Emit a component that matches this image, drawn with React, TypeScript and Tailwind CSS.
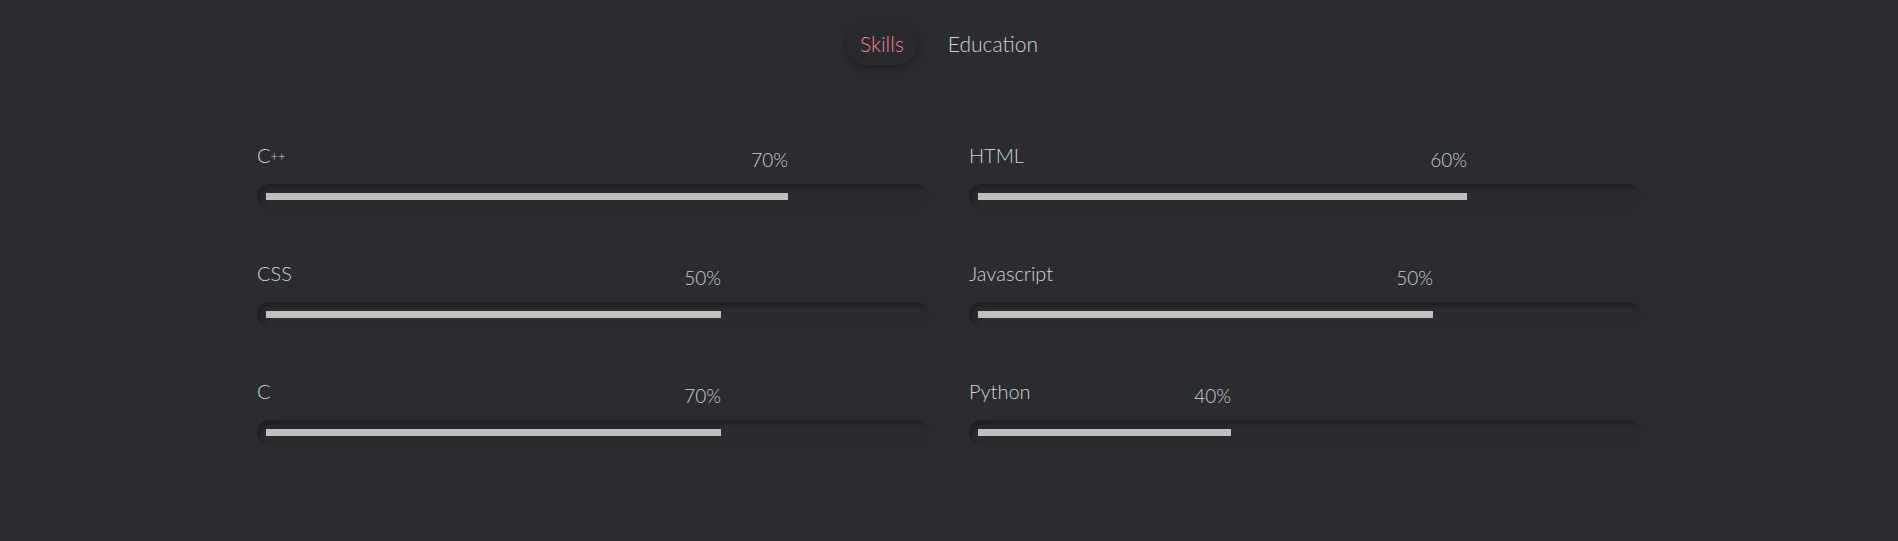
import React, { useState } from 'react'

type Skill = {
  name: React.ReactNode
  pct: string
  fill: number // px width of the filled part
}

const left: Skill[] = [
  { name: <>C<span className="relative -top-[2px] text-[13px]">++</span></>, pct: '70%', fill: 522 },
  { name: 'CSS', pct: '50%', fill: 455 },
  { name: 'C', pct: '70%', fill: 455 },
]

const right: Skill[] = [
  { name: 'HTML', pct: '60%', fill: 489 },
  { name: 'Javascript', pct: '50%', fill: 455 },
  { name: 'Python', pct: '40%', fill: 253 },
]

const SkillBar = ({ skill }: { skill: Skill }) => {
  return (
    <div className="flex flex-col">
      <div className="flex h-[41px] items-start justify-between" style={{ width: skill.fill + 9 }}>
        <span className="text-[20px] leading-[24px] text-[#d4d4d4]">{skill.name}</span>
        <span className="pt-[5px] text-[19px] leading-[24px] text-[#cccccc]">{skill.pct}</span>
      </div>
      <div className="h-[25px] rounded-full pl-[9px] pt-[9px] shadow-[inset_3px_3px_6px_#1c1d20,inset_-2px_-2px_5px_#2e2f34]">
        <div className="h-[7px] bg-[#c0c0c0]" style={{ width: skill.fill }}></div>
      </div>
    </div>
  )
}

export default function App() {
  const [tab, setTab] = useState<'skills' | 'education'>('skills')

  return (
    <main className="min-h-[541px] w-full bg-[#2b2c30] pt-[23px] font-['Lato',sans-serif] font-light">
      <div className="flex justify-center gap-[16px]">
        <button
          onClick={() => setTab('skills')}
          className={
            tab === 'skills'
              ? 'h-[42px] rounded-full bg-[#292a2e] px-[14px] text-[21px] text-[#f07f93] shadow-[0_3px_7px_rgba(0,0,0,0.32),-1px_-1px_4px_rgba(255,255,255,0.02)]'
              : 'h-[42px] rounded-full px-[14px] text-[21px] text-[#d2d2d2]'
          }
        >
          Skills
        </button>
        <button
          onClick={() => setTab('education')}
          className={
            tab === 'education'
              ? 'h-[42px] rounded-full bg-[#292a2e] px-[14px] text-[21px] text-[#f07f93] shadow-[0_3px_7px_rgba(0,0,0,0.32),-1px_-1px_4px_rgba(255,255,255,0.02)]'
              : 'h-[42px] rounded-full px-[14px] text-[21px] text-[#d2d2d2]'
          }
        >
          Education
        </button>
      </div>

      <div className="mx-auto mt-[78px] grid w-[1384px] grid-cols-2 gap-x-[40px]">
        <div className="flex flex-col gap-y-[52px]">
          {left.map((s, i) => (
            <SkillBar key={i} skill={s} />
          ))}
        </div>
        <div className="flex flex-col gap-y-[52px]">
          {right.map((s, i) => (
            <SkillBar key={i} skill={s} />
          ))}
        </div>
      </div>
    </main>
  )
}
